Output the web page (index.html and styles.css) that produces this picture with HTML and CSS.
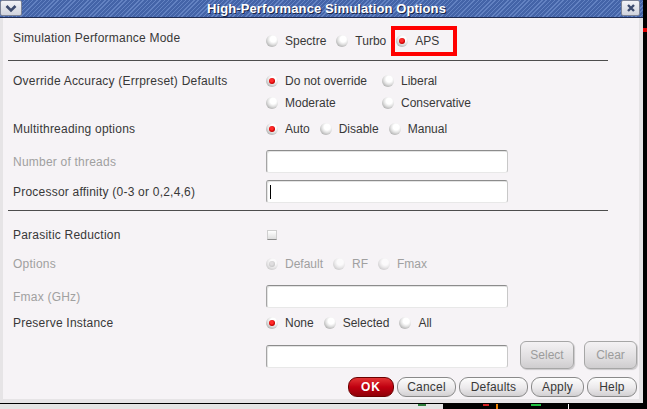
FILE: index.html
```html
<!DOCTYPE html>
<html>
<head>
<meta charset="utf-8">
<link rel="stylesheet" href="styles.css">
</head>
<body>
<div class="desk">
  <div class="window">
    <div class="titlebar">
      <span class="tb-btn tb-menu"><svg width="14" height="9" viewBox="0 0 14 9"><path d="M2.5 2 L7 6.5 L11.5 2" fill="none" stroke="#3d4b6e" stroke-width="2.6"/></svg></span>
      <span class="title">High-Performance Simulation Options</span>
      <span class="tb-btn tb-close"><svg width="10" height="10" viewBox="0 0 10 10"><path d="M2 2 L8 8 M8 2 L2 8" fill="none" stroke="#3d4b6e" stroke-width="2.4"/></svg></span>
    </div>
    <div class="body">
      <div class="row r-mode">
        <span class="lbl lbl-up">Simulation Performance Mode</span>
        <div class="opts">
          <span class="opt"><span class="radio"></span>Spectre</span>
          <span class="opt"><span class="radio"></span>Turbo</span>
          <span class="opt mark"><span class="radio on"></span>APS</span>
        </div>
      </div>
      <div class="sep sep-a"></div>
      <div class="row r-acc">
        <span class="lbl lbl-top">Override Accuracy (Errpreset) Defaults</span>
        <div class="opts-grid">
          <span class="opt"><span class="radio on"></span>Do not override</span>
          <span class="opt"><span class="radio"></span>Liberal</span>
          <span class="opt"><span class="radio"></span>Moderate</span>
          <span class="opt"><span class="radio"></span>Conservative</span>
        </div>
      </div>
      <div class="row r-mt">
        <span class="lbl">Multithreading options</span>
        <div class="opts">
          <span class="opt"><span class="radio on"></span>Auto</span>
          <span class="opt"><span class="radio"></span>Disable</span>
          <span class="opt"><span class="radio"></span>Manual</span>
        </div>
      </div>
      <div class="row r-thr">
        <span class="lbl dim">Number of threads</span>
        <div class="field"></div>
      </div>
      <div class="row r-aff">
        <span class="lbl">Processor affinity (0-3 or 0,2,4,6)</span>
        <div class="field"><span class="caret"></span></div>
      </div>
      <div class="sep sep-b"></div>
      <div class="row r-par">
        <span class="lbl">Parasitic Reduction</span>
        <div class="opts"><span class="check"></span></div>
      </div>
      <div class="row r-optn">
        <span class="lbl dim">Options</span>
        <div class="opts dim">
          <span class="opt"><span class="radio off on"></span>Default</span>
          <span class="opt"><span class="radio off"></span>RF</span>
          <span class="opt"><span class="radio off"></span>Fmax</span>
        </div>
      </div>
      <div class="row r-fmax">
        <span class="lbl dim">Fmax (GHz)</span>
        <div class="field"></div>
      </div>
      <div class="row r-pres">
        <span class="lbl">Preserve Instance</span>
        <div class="opts">
          <span class="opt"><span class="radio on"></span>None</span>
          <span class="opt"><span class="radio"></span>Selected</span>
          <span class="opt"><span class="radio"></span>All</span>
        </div>
      </div>
      <div class="row r-inst">
        <span class="lbl"></span>
        <div class="inst">
          <div class="field field-low"></div>
          <span class="btn-big btn-select">Select</span>
          <span class="btn-big btn-clear">Clear</span>
        </div>
      </div>
      <div class="actions">
        <span class="btn btn-ok">OK</span>
        <span class="btn btn-cancel">Cancel</span>
        <span class="btn btn-defaults">Defaults</span>
        <span class="btn btn-apply">Apply</span>
        <span class="btn btn-help">Help</span>
      </div>
    </div>
  </div>
  <div class="side"><span class="side-red"></span></div>
</div>
<div class="under">
  <div class="under-left"><span class="u-green"></span></div>
  <div class="under-right"><span class="u-red"></span><span class="u-orange"></span><span class="u-tri"></span><span class="u-white"></span></div>
</div>
</body>
</html>
```
FILE: styles.css
```css
html, body {
  margin: 0;
  padding: 0;
}
body {
  width: 647px;
  height: 409px;
  overflow: hidden;
  background: #000;
  font-family: "Liberation Sans", Arial, sans-serif;
  font-size: 12px;
  color: #383838;
}
.desk {
  display: flex;
  height: 403px;
}
.window {
  width: 643px;
  display: flex;
  flex-direction: column;
  background: #e6e4e6;
}
.titlebar {
  height: 17px;
  border-bottom: 1px solid #1f2c52;
  display: flex;
  align-items: center;
  background: repeating-linear-gradient(135deg, #4464a8 0 2px, #6382c2 2px 3px);
}
.tb-btn {
  height: 16px;
  box-sizing: border-box;
  background: linear-gradient(#f2f3f7, #d0d3dd);
  border: 1px solid #7b8296;
  border-radius: 2px;
  display: flex;
  align-items: center;
  justify-content: center;
  align-self: flex-start;
}
.tb-menu {
  width: 22px;
}
.tb-close {
  width: 19px;
  margin-right: 3px;
}
.title {
  flex: 1;
  text-align: center;
  color: #fff;
  font-weight: bold;
  font-size: 13px;
  letter-spacing: 0.1px;
  padding-left: 10px;
  text-shadow: 1px 1px 0 #1b2547;
}
.body {
  flex: 1;
  background: #f6f3f6;
  margin: 0 4px 4px 3px;
  padding-top: 8px;
  display: flex;
  flex-direction: column;
}
.row {
  display: grid;
  grid-template-columns: 253px 1fr;
  align-items: center;
  padding-left: 10px;
}
.lbl {
  white-space: nowrap;
  letter-spacing: 0.22px;
}
.lbl-up {
  align-self: start;
  padding-top: 5px;
}
.lbl-top {
  align-self: start;
  line-height: 22px;
}
.dim {
  color: #a0a0a0;
}
.r-mode { height: 30px; }
.sep {
  height: 1px;
  width: 600px;
  margin-left: 5px;
  background: #4d4d4d;
}
.sep-a { margin-top: 4px; }
.sep-b { margin-top: 7px; }
.r-acc { margin-top: 9px; }
.r-mt { margin-top: 4px; height: 22px; }
.r-thr { margin-top: 10px; height: 23px; }
.r-aff { margin-top: 7px; height: 23px; }
.r-par { margin-top: 13px; height: 22px; }
.r-optn { margin-top: 7px; height: 22px; }
.r-fmax { margin-top: 10px; height: 23px; }
.r-pres { margin-top: 4px; height: 22px; }
.r-inst { margin-top: 7px; height: 28px; }

.opts {
  display: flex;
  align-items: center;
  height: 100%;
}
.opts-grid {
  display: grid;
  grid-template-columns: 116px auto;
  grid-auto-rows: 22px;
  align-items: center;
}
.opt {
  display: inline-flex;
  align-items: center;
  gap: 7px;
  margin-right: 10px;
  white-space: nowrap;
}
.mark {
  position: relative;
  height: 100%;
}
.mark::after {
  content: "";
  position: absolute;
  top: 0;
  bottom: 0;
  left: -5px;
  right: -18px;
  border: 4px solid #f00;
}
.radio {
  position: relative;
  width: 12px;
  height: 12px;
  border-radius: 50%;
  flex: none;
  background: radial-gradient(circle at 60% 34%, #ffffff 0 28%, #e2e2e2 50%, #b4b4b4 76%, #8e8e8e 100%);
}
.radio.on::after {
  content: "";
  position: absolute;
  left: 3px;
  top: 3px;
  width: 6px;
  height: 6px;
  border-radius: 50%;
  background: radial-gradient(circle at 45% 40%, #ff2a2a 0 30%, #d00000 60%, #8a0000 100%);
}
.radio.off {
  opacity: 0.6;
}
.radio.off.on::after {
  background: radial-gradient(circle at 45% 40%, #d0d0d0 0 30%, #a8a8a8 70%, #909090 100%);
}
.check {
  width: 10px;
  height: 10px;
  margin-left: 1px;
  box-sizing: border-box;
  background: linear-gradient(#ffffff, #dedede);
  border: 1px solid #cfcfcf;
  border-bottom-color: #8c8c8c;
}
.field {
  width: 242px;
  height: 23px;
  box-sizing: border-box;
  background: #fff;
  border: 1px solid #c8c8c8;
  border-top-color: #8c8c8c;
  border-left-color: #a4a4a4;
  border-bottom-color: #e8e8e8;
  border-radius: 3px;
  box-shadow: inset 1px 1px 0 #e4e4e4;
  display: flex;
  align-items: center;
}
.caret {
  width: 1px;
  height: 14px;
  margin-left: 3px;
  background: #000;
}
.inst {
  display: flex;
  align-items: flex-start;
  height: 100%;
}
.field-low {
  margin-top: 4px;
}
.btn-big {
  height: 28px;
  box-sizing: border-box;
  display: flex;
  align-items: center;
  justify-content: center;
  border: 1px solid #a6a6a6;
  border-radius: 6px;
  background: linear-gradient(#f4f2f4, #e0dee0 60%, #cfcdcf);
  box-shadow: 1px 1px 1px rgba(0, 0, 0, 0.18);
  color: #9c9c9c;
}
.btn-select { width: 54px; margin-left: 12px; }
.btn-clear { width: 53px; margin-left: 10px; }
.actions {
  display: flex;
  justify-content: flex-end;
  gap: 3px;
  margin-top: 8px;
  margin-right: 2px;
  height: 20px;
}
.btn {
  height: 20px;
  box-sizing: border-box;
  display: flex;
  align-items: center;
  justify-content: center;
  border: 1px solid #8a8a8a;
  border-radius: 9px;
  background: linear-gradient(#fdfdfd, #ebe9eb 55%, #d2d0d2);
  color: #383838;
  letter-spacing: 0.2px;
}
.btn-ok {
  width: 46px;
  background: linear-gradient(#e23434, #c00010 50%, #900008);
  border-color: #6a0000;
  color: #fff;
  font-weight: bold;
  letter-spacing: 1px;
}
.btn-cancel { width: 59px; }
.btn-defaults { width: 69px; }
.btn-apply { width: 53px; }
.btn-help { width: 50px; }

.side {
  flex: 1;
  background: #000;
  display: flex;
  flex-direction: column;
}
.side-red {
  margin-top: 28px;
  height: 4px;
  background: #e00000;
}
.under {
  height: 6px;
  display: flex;
  border-top: 1px solid #000;
  box-sizing: border-box;
}
.under-left {
  width: 443px;
  background: #e4e4e4;
  display: flex;
}
.u-green {
  margin-left: 418px;
  width: 8px;
  height: 2px;
  background: #2f7d3c;
}
.under-right {
  flex: 1;
  background: #000;
  display: flex;
}
.u-red {
  margin-left: 40px;
  width: 6px;
  height: 2px;
  background: #d02020;
}
.u-orange {
  margin-left: 7px;
  width: 2px;
  height: 5px;
  background: #f08000;
}
.u-tri {
  margin-left: 33px;
  width: 10px;
  height: 2px;
  background: #20c040;
}
.u-white {
  margin-left: 27px;
  width: 1px;
  height: 5px;
  background: #fff;
}
```
